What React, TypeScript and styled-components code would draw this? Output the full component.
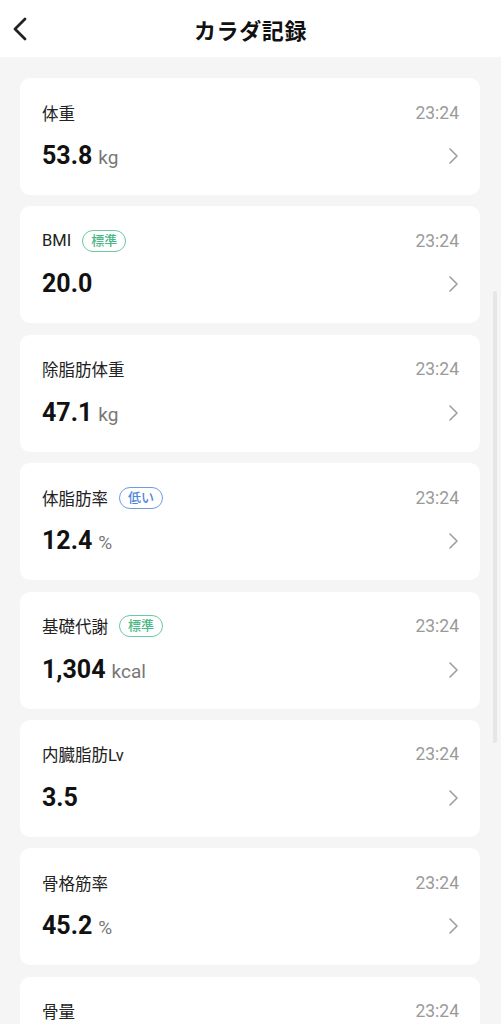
import styled, { createGlobalStyle } from "styled-components"

const GlobalStyle = createGlobalStyle`
    * { box-sizing: border-box; }
    body {
        margin: 0;
        background: #f5f5f5;
        font-family: Roboto, "Noto Sans CJK JP", sans-serif;
        color: #1a1a1a;
    }
`

const Page = styled.div`
    height: 1024px;
    background: #f5f5f5;
    overflow: hidden;
`

const Header = styled.header`
    height: 57px;
    background: #fff;
    display: flex;
    align-items: center;
    justify-content: center;
    position: relative;
`

const BackButton = styled.button`
    position: absolute;
    left: 8px;
    top: 14px;
    width: 24px;
    height: 30px;
    border: none;
    background: none;
    padding: 0;
    display: flex;
    align-items: center;
    justify-content: center;
`

const Title = styled.h1`
    margin: 0;
    font-size: 22px;
    font-weight: 700;
    letter-spacing: 0.6px;
    color: #111;
`

const List = styled.div`
    display: flex;
    flex-direction: column;
    gap: 11.4px;
    padding: 21px 21px 0 20px;
`

const Card = styled.div`
    height: 117px;
    flex-shrink: 0;
    background: #fff;
    border-radius: 10px;
    padding: 23px 21px 0 22px;
    display: flex;
    flex-direction: column;
    gap: 17px;
`

const Row = styled.div`
    display: flex;
    align-items: center;
    justify-content: space-between;
`

const LabelGroup = styled.div`
    display: flex;
    align-items: center;
    gap: 11px;
    height: 23px;
`

const Label = styled.span`
    font-size: 16.5px;
    color: #222;
`

const Badge = styled.span<{ $tone: "green" | "blue" }>`
    font-size: 13px;
    line-height: 20px;
    padding: 0 8px;
    border-radius: 11px;
    border: 1.5px solid ${p => p.$tone === "green" ? "#6cc9a1" : "#6d9be6"};
    color: ${p => p.$tone === "green" ? "#4cb886" : "#4f86dc"};
    font-weight: 500;
`

const Time = styled.span`
    font-size: 17.5px;
    color: #9a9a9a;
`

const ValueGroup = styled.div`
    display: flex;
    align-items: baseline;
    gap: 6px;
    height: 30px;
`

const Value = styled.span`
    font-size: 25px;
    font-weight: 700;
    color: #111;
    line-height: 30px;
`

const Unit = styled.span`
    font-size: 19px;
    color: #777;
`

const Scrollbar = styled.div`
    position: fixed;
    left: 493px;
    top: 291px;
    width: 4px;
    height: 452px;
    border-radius: 2px;
    background: #e6e6e6;
`

type Item = {
    label: string
    value?: string
    unit?: string
    badge?: { text: string, tone: "green" | "blue" }
}

const items: Item[] = [
    { label: "体重", value: "53.8", unit: "kg" },
    { label: "BMI", value: "20.0", badge: { text: "標準", tone: "green" } },
    { label: "除脂肪体重", value: "47.1", unit: "kg" },
    { label: "体脂肪率", value: "12.4", unit: "%", badge: { text: "低い", tone: "blue" } },
    { label: "基礎代謝", value: "1,304", unit: "kcal", badge: { text: "標準", tone: "green" } },
    { label: "内臓脂肪Lv", value: "3.5" },
    { label: "骨格筋率", value: "45.2", unit: "%" },
    { label: "骨量" },
]

const Chevron = () => (
    <svg width="12" height="18" viewBox="0 0 12 18" fill="none">
        <path d="M3 2 L10 9 L3 16" stroke="#9e9e9e" strokeWidth="1.6" strokeLinecap="round" strokeLinejoin="round" />
    </svg>
)

const App = () => {
    return (
        <Page>
            <GlobalStyle />
            <Header>
                <BackButton>
                    <svg width="18" height="26" viewBox="0 0 18 26" fill="none">
                        <path d="M14 3 L4 13 L14 23" stroke="#222" strokeWidth="2.8" strokeLinecap="round" strokeLinejoin="round" />
                    </svg>
                </BackButton>
                <Title>カラダ記録</Title>
            </Header>
            <List>
                {items.map((item, index) => (
                    <Card key={index}>
                        <Row>
                            <LabelGroup>
                                <Label>{item.label}</Label>
                                {item.badge && <Badge $tone={item.badge.tone}>{item.badge.text}</Badge>}
                            </LabelGroup>
                            <Time>23:24</Time>
                        </Row>
                        {item.value && (
                            <Row>
                                <ValueGroup>
                                    <Value>{item.value}</Value>
                                    {item.unit && <Unit>{item.unit}</Unit>}
                                </ValueGroup>
                                <Chevron />
                            </Row>
                        )}
                    </Card>
                ))}
            </List>
            <Scrollbar />
        </Page>
    )
}

export default App
